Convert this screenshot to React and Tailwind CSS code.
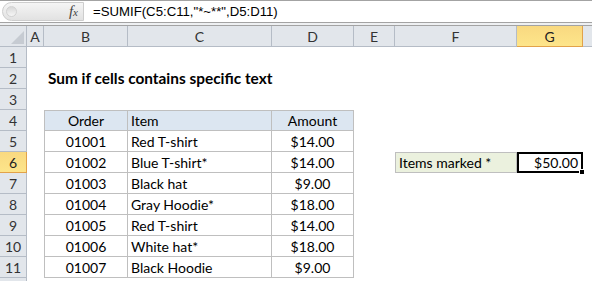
import React from 'react'

const cols = [
  { key: 'A', w: 'w-[17px]' },
  { key: 'B', w: 'w-[84px]' },
  { key: 'C', w: 'w-[144px]' },
  { key: 'D', w: 'w-[82px]' },
  { key: 'E', w: 'w-[41px]' },
  { key: 'F', w: 'w-[122px]' },
  { key: 'G', w: 'w-[66px]' },
]

const orders = [
  ['01001', 'Red T-shirt', '$14.00'],
  ['01002', 'Blue T-shirt*', '$14.00'],
  ['01003', 'Black hat', '$9.00'],
  ['01004', 'Gray Hoodie*', '$18.00'],
  ['01005', 'Red T-shirt', '$14.00'],
  ['01006', 'White hat*', '$18.00'],
  ['01007', 'Black Hoodie', '$9.00'],
]

function RowHead({ n, active }) {
  return (
    <div
      className={
        'w-[27px] h-[21px] shrink-0 flex items-center justify-center border-r border-b text-[14px] ' +
        (active
          ? 'bg-gradient-to-b from-[#f9d980] to-[#fde58a] border-[#e2a24a] text-[#222]'
          : 'bg-[#e2e6eb] border-[#b5bcc6] text-[#333]')
      }
    >
      {n}
    </div>
  )
}

function Row({ n, active, children }) {
  return (
    <div className="flex h-[21px]">
      <RowHead n={n} active={active} />
      {children}
    </div>
  )
}

export default function App() {
  return (
    <div className="w-[592px] h-[281px] overflow-hidden bg-white text-black" style={{ fontFamily: 'Lato, sans-serif' }}>
      {/* formula bar */}
      <div className="flex h-[23px] border-t border-b border-[#a3a3a3] bg-white">
        <div className="w-[84px] h-full flex items-center pl-[2px] shrink-0">
          <div className="relative w-[82px] h-[19px] rounded-l-full bg-gradient-to-b from-[#f5f5f5] to-[#e2e2e2] border border-[#cdcdcd] flex items-center justify-end pr-[5px]">
            <div className="absolute left-[3px] top-[3px] w-[11px] h-[11px] rounded-full bg-gradient-to-b from-[#d8d8d8] to-[#f6f6f6] border border-[#d2d2d2]" />
            <span className="italic text-[15px] text-[#444] leading-none" style={{ fontFamily: '"Liberation Serif", serif' }}>
              f<span className="text-[11px]">x</span>
            </span>
          </div>
        </div>
        <div className="flex-1 flex items-center pl-[9px] text-[13.2px] text-black" style={{ fontFamily: '"Liberation Sans", sans-serif' }}>
          =SUMIF(C5:C11,"*~**",D5:D11)
        </div>
      </div>
      <div className="h-[2px] bg-[#eef0f2] border-b border-[#a3a3a3] box-content" />

      {/* column headers */}
      <div className="flex h-[21px] text-[14px]">
        <div className="relative w-[27px] h-full shrink-0 bg-[#e2e6eb] border-r border-b border-[#b5bcc6]">
          <div className="absolute right-[2px] bottom-[2px] w-0 h-0 border-l-[13px] border-l-transparent border-b-[13px] border-b-[#c6cbd2]" />
        </div>
        {cols.map(c => (
          <div
            key={c.key}
            className={
              c.w +
              ' h-full shrink-0 flex items-center justify-center border-r border-b ' +
              (c.key === 'G'
                ? 'bg-gradient-to-b from-[#f9d980] to-[#fde58a] border-[#e2a24a] text-[#222]'
                : 'bg-[#e2e6eb] border-[#b5bcc6] text-[#333]')
            }
          >
            {c.key}
          </div>
        ))}
        <div className="flex-1 h-full bg-[#e2e6eb] border-b border-[#b5bcc6]" />
      </div>

      {/* grid */}
      <div className="text-[14px]">
        <Row n={1} />
        <Row n={2}>
          <div className="w-[17px] shrink-0" />
          <div className="pl-[4px] flex items-center font-bold text-[15.4px] whitespace-nowrap">Sum if cells contains specific text</div>
        </Row>
        <Row n={3} />
        <Row n={4}>
          <div className="w-[17px] shrink-0" />
          <div className="w-[84px] shrink-0 flex items-center justify-center bg-[#dce6f1] border border-[#bfbfbf]">Order</div>
          <div className="w-[144px] shrink-0 flex items-center pl-[3px] bg-[#dce6f1] border-y border-r border-[#bfbfbf]">Item</div>
          <div className="w-[82px] shrink-0 flex items-center justify-center bg-[#dce6f1] border-y border-r border-[#bfbfbf]">Amount</div>
        </Row>
        {orders.map((o, i) => {
          const n = i + 5
          return (
            <Row key={n} n={n} active={n === 6}>
              <div className="w-[17px] shrink-0" />
              <div className="w-[84px] shrink-0 flex items-center justify-center border-x border-b border-[#bfbfbf]">{o[0]}</div>
              <div className="w-[144px] shrink-0 flex items-center pl-[3px] border-r border-b border-[#bfbfbf]">{o[1]}</div>
              <div className="w-[82px] shrink-0 flex items-center justify-center border-r border-b border-[#bfbfbf]">{o[2]}</div>
              {n === 6 && (
                <>
                  <div className="w-[41px] shrink-0" />
                  <div className="w-[122px] shrink-0 flex items-center pl-[3px] bg-[#ebf1de] border border-[#bfbfbf]">Items marked *</div>
                  <div className="relative w-[66px] shrink-0 flex items-center justify-end pr-[3px] border-2 border-black">
                    $50.00
                    <div className="absolute right-[-4px] bottom-[-4px] w-[6px] h-[6px] bg-black border border-white" />
                  </div>
                </>
              )}
            </Row>
          )
        })}
        {/* sliver of the next row */}
        <div className="flex h-[21px]">
          <div className="w-[27px] h-full shrink-0 bg-[#e2e6eb] border-r border-[#b5bcc6]" />
        </div>
      </div>
    </div>
  )
}
